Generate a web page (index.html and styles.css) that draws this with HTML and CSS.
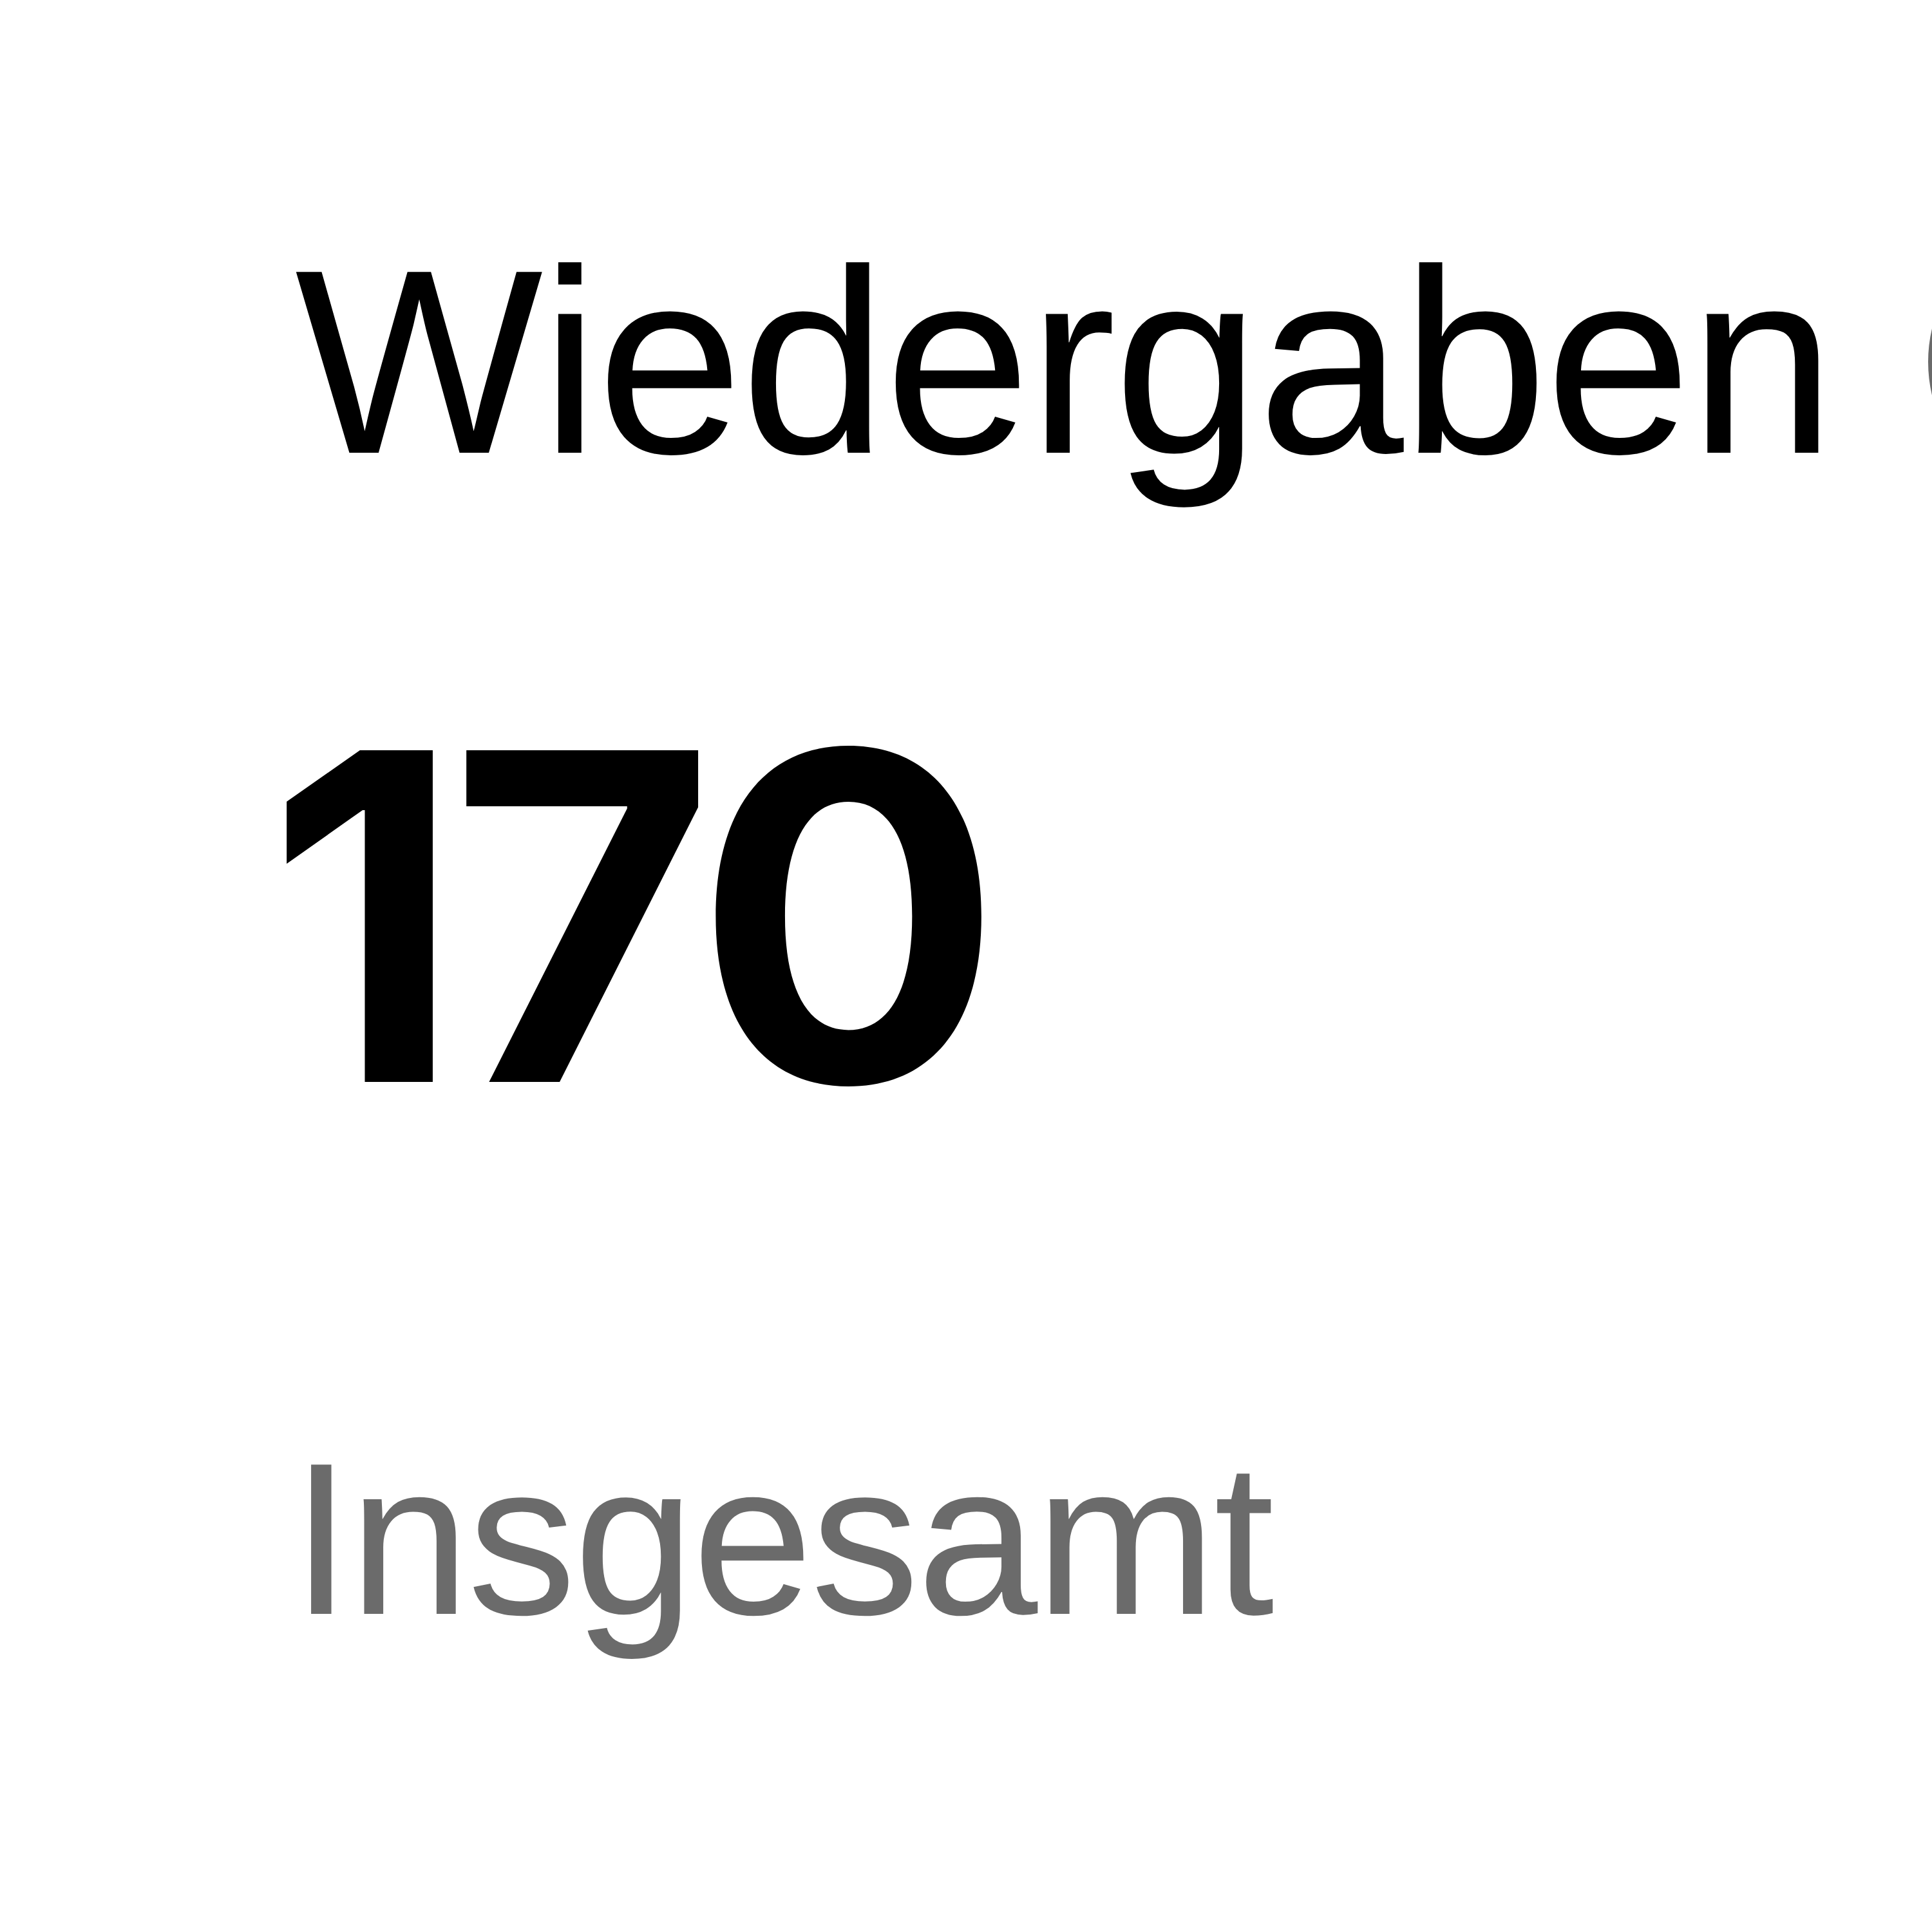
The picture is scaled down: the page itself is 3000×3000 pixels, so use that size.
FILE: index.html
```html
<!DOCTYPE html>
<html lang="de">
<head>
    <meta charset="UTF-8">
    <link rel="stylesheet" href="styles.css">
</head>
<body>
<main class="stat">
    <h2 class="stat-title">
        <span>Wiedergaben</span>
        <!-- info icon -->
        <svg class="stat-info" viewBox="0 0 450 450" width="450" height="450">
            <circle cx="225" cy="225" r="211" fill="none" stroke="#6a6a6a" stroke-width="26"/>
            <rect x="212" y="200" width="26" height="140" fill="#6a6a6a"/>
            <circle cx="225" cy="140" r="18" fill="#6a6a6a"/>
        </svg>
    </h2>
    <p class="stat-value">170</p>
    <p class="stat-caption">Insgesamt</p>
</main>
</body>
</html>
```

FILE: styles.css
```css
* {
    margin: 0;
    padding: 0;
}

body {
    background: #fff;
    overflow: hidden;
    font-family: "Liberation Sans", Arial, sans-serif;
}

.stat {
    display: flex;
    flex-direction: column;
    align-items: flex-start;
    padding: 325px 0 0 458px;
}

.stat-title {
    display: flex;
    align-items: center;
    white-space: nowrap;
    font-size: 408px;
    font-weight: 400;
    line-height: 474px;
    letter-spacing: -3.5px;
    color: #000;
}

.stat-info {
    flex: none;
    margin-left: 147px;
}

.stat-value {
    margin: 180px 0 0 -45px;
    font-family: Inter, sans-serif;
    font-size: 708px;
    font-weight: 700;
    line-height: 888px;
    letter-spacing: -20px;
    color: #000;
}

.stat-caption {
    margin: 327px 0 0 -6px;
    font-size: 337px;
    line-height: 391px;
    letter-spacing: -3.5px;
    color: #6b6b6b;
}
```
